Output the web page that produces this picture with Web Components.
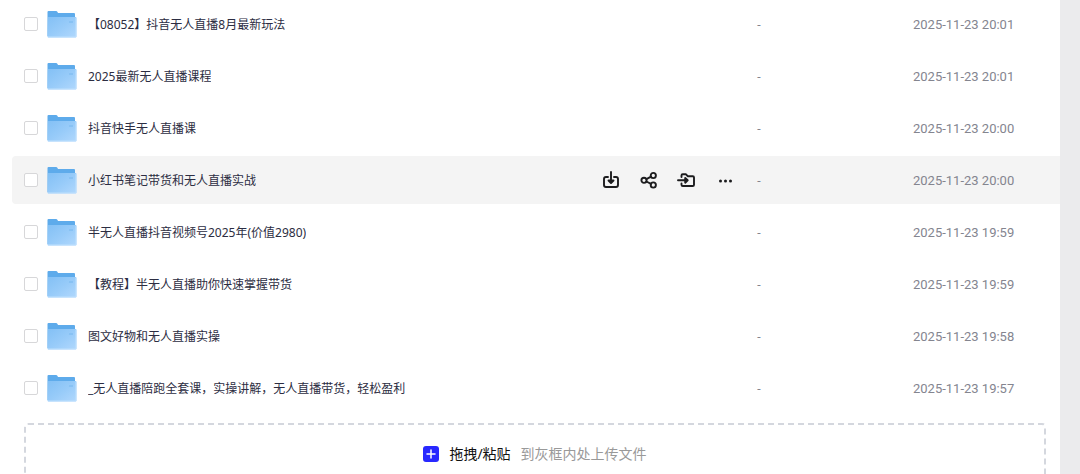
<!DOCTYPE html>
<html lang="zh-CN">
<head>
<meta charset="utf-8">
<meta name="viewport" content="width=device-width, initial-scale=1">
<title>文件列表</title>
<style>
  body {
    margin: 0;
    font-family: "Noto Sans", "Noto Sans CJK SC", sans-serif;
    font-size: 12px;
    line-height: 21px;
    color: #2c2d42;
    background: #ebebed;
  }
</style>
</head>
<body>
<drive-page>
  <file-table></file-table>
  <upload-zone slot="footer">
    <span slot="action">拖拽/粘贴</span>
    到灰框内处上传文件
  </upload-zone>
</drive-page>

<script>
(() => {
  const FILES = [
    { name: '【08052】抖音无人直播8月最新玩法', size: '-', date: '2025-11-23 20:01' },
    { name: '2025最新无人直播课程', size: '-', date: '2025-11-23 20:01' },
    { name: '抖音快手无人直播课', size: '-', date: '2025-11-23 20:00' },
    { name: '小红书笔记带货和无人直播实战', size: '-', date: '2025-11-23 20:00', active: true },
    { name: '半无人直播抖音视频号2025年(价值2980)', size: '-', date: '2025-11-23 19:59' },
    { name: '【教程】半无人直播助你快速掌握带货', size: '-', date: '2025-11-23 19:59' },
    { name: '图文好物和无人直播实操', size: '-', date: '2025-11-23 19:58' },
    { name: '_无人直播陪跑全套课，实操讲解，无人直播带货，轻松盈利', size: '-', date: '2025-11-23 19:57' }
  ];

  const ACTIONS = [
    ['download', '下载'],
    ['share', '分享'],
    ['move', '移动'],
    ['more', '更多']
  ];

  const ICONS = {
    download: `
      <path d="M6 6H4a2 2 0 0 0-2 2v6a2 2 0 0 0 2 2h10a2 2 0 0 0 2-2V8a2 2 0 0 0-2-2h-2"/>
      <path d="M9 1v10M6.500 9.500L9 12l2.500-2.500z"/>`,
    share: `
      <circle cx="4" cy="9.300" r="2.600"/>
      <circle cx="13.300" cy="4.500" r="2.600"/>
      <circle cx="13.300" cy="14" r="2.600"/>
      <path d="M6.400 8.100L11 5.700M6.400 10.500L11 12.800"/>`,
    move: `
      <path d="M3.500 6V4.500a1.200 1.200 0 0 1 1.200-1.200H8l1.700 1.900h5a1.300 1.300 0 0 1 1.300 1.300v7.200a1.300 1.300 0 0 1-1.300 1.300H4.800a1.300 1.300 0 0 1-1.300-1.300V12.500"/>
      <path d="M0 9.300h9M7.200 6.900l2.500 2.400-2.500 2.400z"/>`,
    more: `
      <g fill="currentColor" stroke="none">
        <circle cx="4.500" cy="10" r="1.500"/>
        <circle cx="9.500" cy="10" r="1.500"/>
        <circle cx="14.500" cy="10" r="1.500"/>
      </g>`
  };

  /**
   * Outline glyph for a row action, picked by the `name` attribute.
   */
  class ActionIcon extends HTMLElement {
    constructor() {
      super();
      this.attachShadow({ mode: 'open' });
    }

    connectedCallback() {
      this.shadowRoot.innerHTML = `
        <style>
          :host { display: block; }
          svg { display: block; overflow: visible; }
        </style>
        <svg width="18" height="18" viewBox="0 0 18 18" fill="none" stroke="currentColor"
          stroke-width="1.900" stroke-linecap="round" stroke-linejoin="round" aria-hidden="true">
          ${ICONS[this.getAttribute('name')] || ''}
        </svg>`;
    }
  }

  const folderTemplate = document.createElement('template');
  folderTemplate.innerHTML = `
    <style>
      :host { display: block; flex: none; }
      svg { display: block; }
    </style>
    <svg width="30" height="28" viewBox="0 0 30 28" aria-hidden="true">
      <defs>
        <linearGradient id="front" x1="0" y1="0" x2="1" y2="1">
          <stop offset="0" stop-color="#83c0f5"/>
          <stop offset="0.500" stop-color="#97cbf9"/>
          <stop offset="1" stop-color="#b1d8fd"/>
        </linearGradient>
      </defs>
      <path fill="#5eabeb" d="M.5 2q0-1 1-1H9q1 0 1.500 1l.5 1h16q1 0 1 1v22H.5z"/>
      <path fill="url(#front)" d="M1.500 7H28.500q1 0 1 1v18.500q0 1-1 1h-27q-1 0-1-1L1 7z"/>
      <path fill="none" stroke="#bfe0fd" d="M29 8v19H1"/>
      <rect x="22" y="11" width="4" height="2" fill="#88c2f4"/>
    </svg>
  `;

  class FolderIcon extends HTMLElement {
    constructor() {
      super();
      this.attachShadow({ mode: 'open' }).append(folderTemplate.content.cloneNode(true));
    }
  }

  const tableTemplate = document.createElement('template');
  tableTemplate.innerHTML = `
    <style>
      :host { display: block; }
      table { display: block; }
      tbody { display: grid; gap: 4px; }
      tr {
        display: grid;
        grid-template-columns: 23px minmax(0, 1fr) 155px 156px 147px;
        align-items: center;
        height: 48px;
        padding-left: 12px;
        border-radius: 4px 0 0 4px;
      }
      tr.active { background: #f4f4f4; }
      td { padding: 0; }
      input {
        appearance: none;
        display: block;
        box-sizing: border-box;
        width: 14px;
        height: 14px;
        margin: 0;
        border: 1px solid #d7d7d9;
        border-radius: 2px;
        background: #fff;
      }
      input:checked { background: #2828ff; border-color: #2828ff; }
      .name { display: flex; align-items: center; gap: 11px; min-width: 0; }
      .name a {
        overflow: hidden;
        color: inherit;
        text-decoration: none;
        text-overflow: ellipsis;
        white-space: nowrap;
      }
      .actions { display: flex; gap: 20px; }
      button {
        padding: 0;
        border: 0;
        background: none;
        color: #1c1c1e;
        cursor: pointer;
      }
      .size, .date { color: #84858f; }
      .date {
        font-family: Roboto, "Noto Sans", sans-serif;
        font-size: 13px;
        white-space: nowrap;
      }
    </style>
    <table><tbody></tbody></table>
  `;

  /**
   * File listing. The active row also shows its action buttons.
   */
  class FileTable extends HTMLElement {
    constructor() {
      super();
      this.attachShadow({ mode: 'open' }).append(tableTemplate.content.cloneNode(true));
    }

    connectedCallback() {
      this.shadowRoot.querySelector('tbody').innerHTML = FILES.map((f) => this.#row(f)).join('');
    }

    #row(file) {
      const actions = file.active
        ? ACTIONS.map(([icon, label]) =>
          `<button type="button" aria-label="${label}"><action-icon name="${icon}"></action-icon></button>`).join('')
        : '';

      return `
        <tr class="${file.active ? 'active' : ''}">
          <td><input type="checkbox" aria-label="${file.name}"></td>
          <td class="name"><folder-icon></folder-icon><a href="#">${file.name}</a></td>
          <td class="actions">${actions}</td>
          <td class="size">${file.size}</td>
          <td class="date">${file.date}</td>
        </tr>`;
    }
  }

  const uploadTemplate = document.createElement('template');
  uploadTemplate.innerHTML = `
    <style>
      :host {
        display: flex;
        align-items: center;
        justify-content: center;
        gap: 10px;
        padding: 19px 0 32px;
        border: 2px dashed #d4d7de;
        border-radius: 4px;
        font-size: 14px;
        line-height: 20px;
        color: #999;
      }
      svg { display: block; }
      .action { color: #111; }
    </style>
    <svg width="16" height="16" viewBox="0 0 16 16" aria-hidden="true">
      <rect width="16" height="16" rx="3" fill="#2828ff"/>
      <path d="M8 4v8M4 8h8" stroke="#fff" stroke-width="1.500" stroke-linecap="round"/>
    </svg>
    <span class="action"><slot name="action"></slot></span>
    <span><slot></slot></span>
  `;

  class UploadZone extends HTMLElement {
    constructor() {
      super();
      this.attachShadow({ mode: 'open' }).append(uploadTemplate.content.cloneNode(true));
    }
  }

  const pageTemplate = document.createElement('template');
  pageTemplate.innerHTML = `
    <style>
      :host {
        display: block;
        box-sizing: border-box;
        height: 100vh;
        padding-right: 20px;
        overflow: hidden;
      }
      main {
        box-sizing: border-box;
        min-height: 100%;
        padding-left: 12px;
        background: #fff;
      }
      ::slotted([slot="footer"]) { margin: 11px 14px 0 12px; }
    </style>
    <main>
      <slot></slot>
      <slot name="footer"></slot>
    </main>
  `;

  class DrivePage extends HTMLElement {
    constructor() {
      super();
      this.attachShadow({ mode: 'open' }).append(pageTemplate.content.cloneNode(true));
    }
  }

  customElements.define('action-icon', ActionIcon);
  customElements.define('folder-icon', FolderIcon);
  customElements.define('file-table', FileTable);
  customElements.define('upload-zone', UploadZone);
  customElements.define('drive-page', DrivePage);
})();
</script>
</body>
</html>
